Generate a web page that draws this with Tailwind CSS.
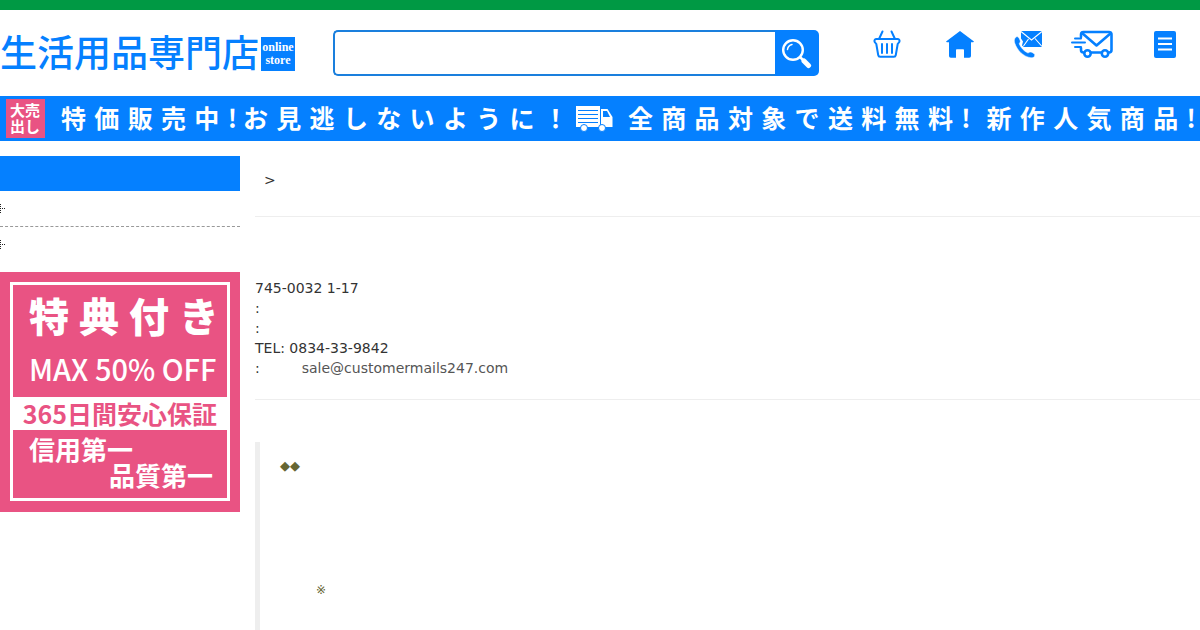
<!DOCTYPE html>
<html lang="ja">
<head>
    <meta charset="UTF-8">
    <meta name="viewport" content="width=device-width, initial-scale=1.0">
    <title>生活用品専門店</title>
    <script src="https://cdn.jsdelivr.net/npm/@tailwindcss/browser@4"></script>
</head>
<body class="bg-white text-[#333] text-sm leading-5 font-['DejaVu_Sans','Noto_Sans_CJK_JP',sans-serif]">
    <div class="h-[10px] bg-[#009944]"></div>

    <!-- Header -->
    <header class="flex items-start h-[86px] pt-5 text-[#0580ff]">
        <a href="#" class="flex items-start gap-[2px] w-[333px] shrink-0">
            <span class="font-['Noto_Sans_CJK_JP',sans-serif] font-medium text-[37px] leading-[42px] whitespace-nowrap">生活用品専門店</span>
            <span class="flex flex-col items-center justify-center w-[34px] h-[34px] mt-[7px] bg-[#0580ff] text-white font-['Liberation_Serif',serif] font-bold text-[12px] leading-[13px]">
                <span>online</span>
                <span>store</span>
            </span>
        </a>
        <form class="flex w-[486px] h-[46px] shrink-0" onsubmit="return false">
            <input type="text" aria-label="検索" class="grow min-w-0 border-2 border-r-0 border-[#1a7fdd] rounded-l-[5px] px-3 text-base outline-none">
            <button type="submit" aria-label="検索する" class="flex items-center justify-center w-11 bg-[#0580ff] rounded-r-[5px]">
                <svg class="w-8 h-8" viewBox="0 0 32 32" fill="none" stroke="#fff" stroke-linecap="round">
                    <circle cx="12" cy="13" r="9.800" stroke-width="2.400"/>
                    <path d="M6.500 12.500a6 6 0 0 1 4.500-5" stroke-width="1.500"/>
                    <path d="M19.500 20.500l3 3" stroke-width="2.500"/>
                    <path d="M23 24l4.500 4.500" stroke-width="5"/>
                </svg>
            </button>
        </form>
        <nav class="grow flex justify-end pr-6">
            <a href="#" aria-label="カート" class="mr-[45px]">
                <svg class="w-7 h-7" viewBox="0 0 28 28" fill="none" stroke="currentColor" stroke-width="2" stroke-linecap="round" stroke-linejoin="round">
                    <path d="M9.500 1.500L6 9M18.500 1.500L22 9"/>
                    <path d="M3.500 9h21a2 2 0 0 1 2 2.500c-.3 1.200-1.500 1.800-1.800 2.500l-1.900 11a2 2 0 0 1-2 1.700H7.200a2 2 0 0 1-2-1.700L3.300 14c-.3-.7-1.500-1.300-1.800-2.500A2 2 0 0 1 3.500 9z"/>
                    <path d="M9 14v9M14 14v9M19 14v9"/>
                </svg>
            </a>
            <a href="#" aria-label="ホーム" class="mr-10">
                <svg class="w-7 h-7" viewBox="0 0 28 28" fill="currentColor">
                    <path d="M14 1L28 11.500 27.200 12.300H25V26a1.800 1.800 0 0 1-1.800 1.800H18V20a.8.8 0 0 0-.8-.8h-6.400a.8.8 0 0 0-.8.8v7.800H4.800A1.800 1.800 0 0 1 3 26V12.300H.8L0 11.500z"/>
                </svg>
            </a>
            <a href="#" aria-label="お問い合わせ" class="mr-[29px]">
                <svg class="w-7 h-7" viewBox="0 0 28 28" fill="currentColor">
                    <path d="M7 1h21v16H10l-2-1.500 1-4-2-3z"/>
                    <path d="M7 1.500l10.500 8.500L28 1.500M9.500 16l5-7M28 16.500l-7-8" stroke="#fff" stroke-width="1.100" fill="none"/>
                    <path d="M3 6.500C.5 7.500-.2 10 .7 13 3 20 9 26.500 17 27.800c2.500.3 4-.8 3.700-3.300-.3-1-3.300-2.800-4.700-2.500-1 .2-1.500 1.200-2.500.8C10 21 6.500 17.500 5.300 14c-.3-1 1-1.500 1-2.500C6.300 10 4.500 6.500 3 6.500z" stroke="#fff" stroke-width=".5"/>
                </svg>
            </a>
            <a href="#" aria-label="配送" class="mr-[41px]">
                <svg class="w-[42px] h-7" viewBox="0 0 42 28" fill="none" stroke="currentColor" stroke-width="2.600" stroke-linecap="round" stroke-linejoin="round">
                    <path d="M10 7V4.500A2.500 2.500 0 0 1 12.500 2h25.500A2.500 2.500 0 0 1 40.500 4.500v15.500a2.500 2.500 0 0 1-2.500 2.500M30 22.500H20M12.500 22.500A2.500 2.500 0 0 1 10 20v-2"/>
                    <path d="M11 3l14.500 12.500L40 3"/>
                    <path d="M4 8.500h6M1 12.500h13M4 17h6" stroke-width="2"/>
                    <circle cx="16.500" cy="23.500" r="3.200"/>
                    <circle cx="34" cy="23.500" r="3.200"/>
                </svg>
            </a>
            <a href="#" aria-label="メニュー">
                <svg class="w-[22px] h-7" viewBox="0 0 22 28">
                    <rect y="1" width="22" height="27" rx="2" fill="currentColor"/>
                    <path d="M4 8.500h14M4 14h14M4 19.500h14" stroke="#fff" stroke-width="2"/>
                </svg>
            </a>
        </nav>
    </header>

    <!-- Sale banner -->
    <div class="flex items-center h-[45px] pl-[6px] bg-[#0580ff] text-white font-['Noto_Sans_CJK_JP',sans-serif] font-bold text-[25px] whitespace-nowrap overflow-hidden">
        <span class="w-[39px] h-[39px] px-1 pt-[3px] mr-4 shrink-0 bg-[#e95383] text-[15px] leading-4 whitespace-normal">大売出し</span>
        <span class="mr-[6px] h-[45px] leading-[42px]">特&emsp13;価&emsp13;販&emsp13;売&emsp13;中&emsp13;!</span>
        <span class="h-[45px] leading-[42px]">お&emsp13;見&emsp13;逃&emsp13;し&emsp13;な&emsp13;い&emsp13;よ&emsp13;う&emsp13;に&emsp13;！</span>
        <svg class="w-[37px] h-[26px] ml-2 mr-[15px] shrink-0" viewBox="0 0 37 26" fill="#fff">
            <path d="M0 0h24v21H0z"/>
            <path d="M25 3h6.500L36.500 11v10H25z"/>
            <path d="M27 5h4l3 6h-7z" fill="#0580ff"/>
            <path d="M2 4.500h20M2 8.500h20M2 12.500h20M2 16.500h20" stroke="#0580ff" stroke-width="1"/>
            <circle cx="8" cy="22" r="3.500" stroke="#0580ff"/>
            <circle cx="26" cy="22" r="3.500" stroke="#0580ff"/>
        </svg>
        <span class="mr-4 h-[45px] leading-[42px]">全&emsp13;商&emsp13;品&emsp13;対&emsp13;象&emsp13;で&emsp13;送&emsp13;料&emsp13;無&emsp13;料&emsp13;!</span>
        <span class="h-[45px] leading-[42px]">新&emsp13;作&emsp13;人&emsp13;気&emsp13;商&emsp13;品&emsp13;!</span>
    </div>

    <div class="flex gap-[15px] pt-[15px]">
        <!-- Sidebar -->
        <aside class="w-60 shrink-0">
            <div class="h-[35px] bg-[#0580ff]"></div>
            <ul>
                <li class="flex items-center h-9 border-b border-dashed border-[#999]">
                    <svg class="w-[6px] h-[10px]" viewBox="0 0 6 10" stroke="#222" stroke-dasharray="1 1">
                        <path d="M.5 0v10M2 4.500h4"/>
                    </svg>
                </li>
                <li class="flex items-center h-9">
                    <svg class="w-[6px] h-[10px]" viewBox="0 0 6 10" stroke="#222" stroke-dasharray="1 1">
                        <path d="M.5 0v10M2 4.500h4"/>
                    </svg>
                </li>
            </ul>
            <a href="#" class="block mt-[9px] p-[10px] pb-[11px] bg-[#e95383] text-white font-['Noto_Sans_CJK_JP',sans-serif] font-bold whitespace-nowrap">
                <div class="h-[219px] border-3 border-white">
                    <p class="h-[60px] pl-4 font-black text-[40px] leading-[60px]">特&emsp14;典&emsp14;付&emsp14;き</p>
                    <p class="h-[52px] pl-4 font-medium text-[29px] leading-[46px]">MAX 50% OFF</p>
                    <p class="h-[33px] bg-white text-center text-[#e95383] text-[25px] leading-[33px]">365日間安心保証</p>
                    <p class="h-[27px] pl-4 text-[26px] leading-[38px]">信用第一</p>
                    <p class="h-[27px] pr-[14px] text-right text-[26px] leading-[36px]">品質第一</p>
                </div>
            </a>
        </aside>

        <!-- Content -->
        <main class="grow min-w-0">
            <div class="h-[61px] pt-[14px] pl-[9px] border-b border-[#eee]">&gt;</div>
            <div class="h-[183px] pt-[61px] border-b border-[#eee]">
                <p>745-0032 1-17</p>
                <p>:</p>
                <p>:</p>
                <p>TEL: 0834-33-9842</p>
                <p>:<a href="mailto:sale@customermails247.com" class="ml-[42px] text-[#555]">sale@customermails247.com</a></p>
            </div>
            <div class="h-[188px] mt-[42px] pt-[14px] pl-5 border-l-5 border-[#eee] text-[#663]">
                <p class="text-[13px]">◆◆</p>
                <p class="mt-[104px] pl-9 text-xs leading-5">※</p>
            </div>
        </main>
    </div>
</body>
</html>
